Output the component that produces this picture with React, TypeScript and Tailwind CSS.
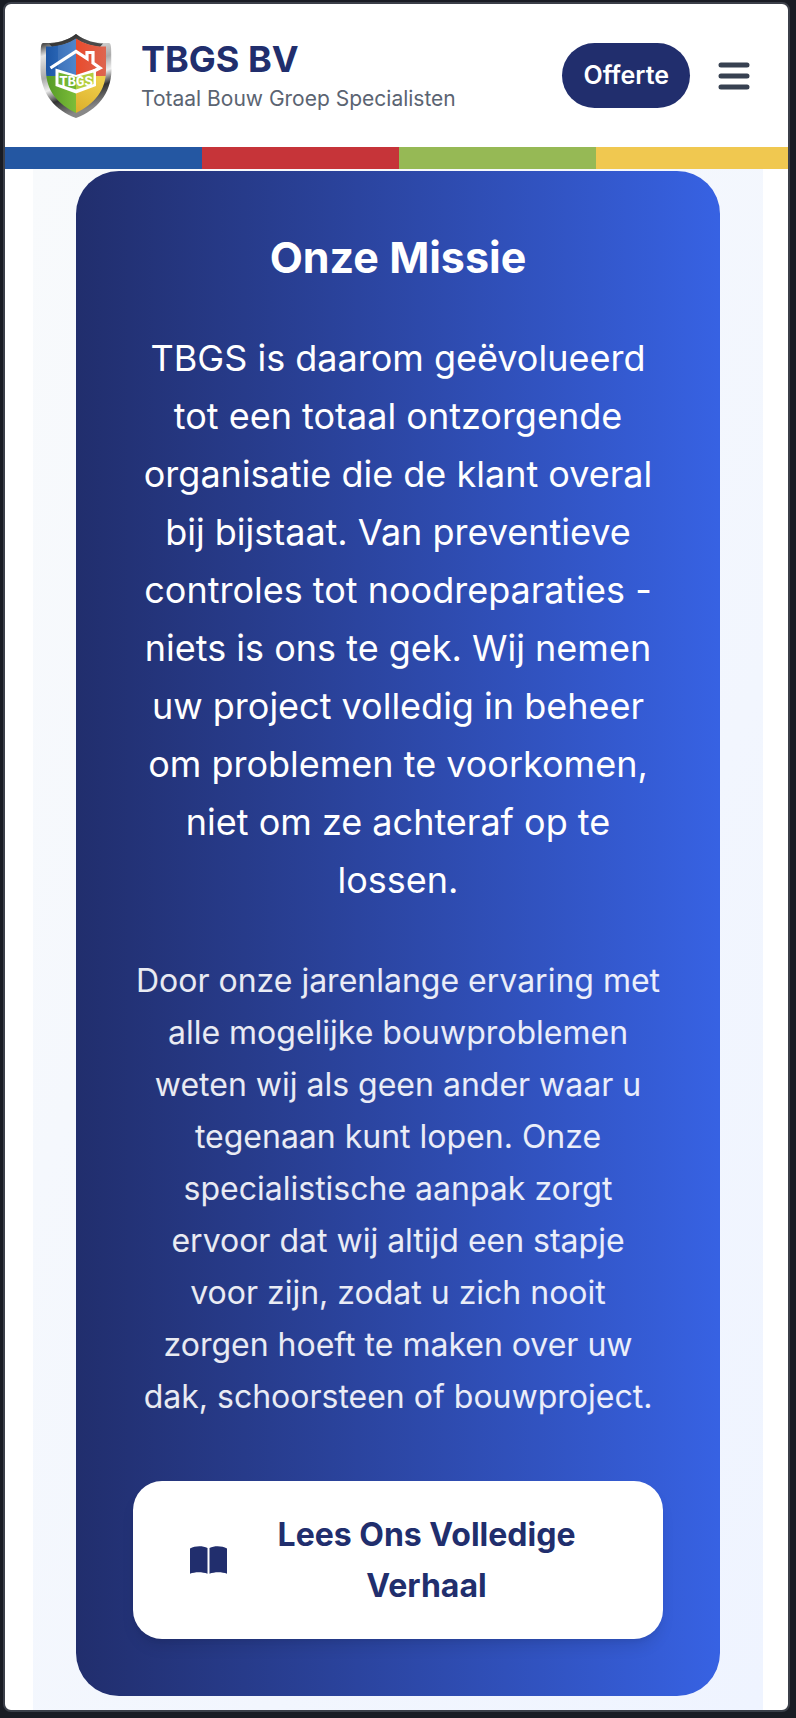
const missionText =
  'TBGS is daarom geëvolueerd tot een totaal ontzorgende organisatie die de klant overal bij bijstaat. Van preventieve controles tot noodreparaties - niets is ons te gek. Wij nemen uw project volledig in beheer om problemen te voorkomen, niet om ze achteraf op te lossen.';

const experienceText =
  'Door onze jarenlange ervaring met alle mogelijke bouwproblemen weten wij als geen ander waar u tegenaan kunt lopen. Onze specialistische aanpak zorgt ervoor dat wij altijd een stapje voor zijn, zodat u zich nooit zorgen hoeft te maken over uw dak, schoorsteen of bouwproject.';

function ShieldLogo() {
  return (
    <svg viewBox="0 0 72 84" className="h-[84px] w-[72px] shrink-0" role="img" aria-label="TBGS logo">
      <defs>
        <linearGradient id="rim" x1="0" y1="0" x2="0.3" y2="1">
          <stop offset="0" stopColor="#222" />
          <stop offset="0.13" stopColor="#555" />
          <stop offset="0.25" stopColor="#e4e4e4" />
          <stop offset="0.5" stopColor="#aaa" />
          <stop offset="0.65" stopColor="#eee" />
          <stop offset="0.8" stopColor="#333" />
          <stop offset="1" stopColor="#888" />
        </linearGradient>
        <linearGradient id="blue" x1="0" x2="1">
          <stop offset="0" stopColor="#164f9f" />
          <stop offset="1" stopColor="#3b78c6" />
        </linearGradient>
        <linearGradient id="red" x1="0" x2="1">
          <stop offset="0" stopColor="#e94b2c" />
          <stop offset="1" stopColor="#db6a57" />
        </linearGradient>
        <linearGradient id="green" x1="0" x2="1">
          <stop offset="0" stopColor="#4d9224" />
          <stop offset="1" stopColor="#7cbd38" />
        </linearGradient>
        <linearGradient id="yellow" x1="0" y1="1" x2="0.4" y2="0">
          <stop offset="0" stopColor="#d9aa25" />
          <stop offset="1" stopColor="#efcf4c" />
        </linearGradient>
        <clipPath id="shield">
          <path d="M36 4.500C28 10 17 13 6 12.500V36C6 57 18 70 36 79C54 70 66 57 66 36V12.500C55 13 44 10 36 4.500Z" />
        </clipPath>
      </defs>
      <path
        d="M36 0C27 7 15 9.500 3 9C0 9.500 1 17 0.500 36C1 60 15 76 36 84C57 76 71 60 71.500 36C71 17 72 9.500 69 9C57 9.500 45 7 36 0Z"
        fill="url(#rim)"
      />
      <path d="M36 0C27 7 15 9.500 9 9.500L12 13C20 12 28 10 36 5C44 10 52 12 60 13L63 9.500C57 9.500 45 7 36 0Z" fill="#252525" opacity="0.8" />
      <g clipPath="url(#shield)">
        <rect width="36" height="42" fill="url(#blue)" />
        <rect x="36" width="36" height="42" fill="url(#red)" />
        <rect y="42" width="36" height="42" fill="url(#green)" />
        <rect x="36" y="42" width="36" height="42" fill="url(#yellow)" />
        <path d="M18 9L36 3V42H18Z" fill="#fff" opacity="0.1" />
      </g>
      <path d="M15.500 34.500L36 41L56 34.500V52L36 59.500L15.500 52Z" fill="#fff" />
      <path d="M18.500 38.500L36 43V55.500L18.500 50Z" fill="#72b534" />
      <path d="M36 43L53.500 38.500V50L36 55.500Z" fill="#b4cf40" />
      <path d="M10.500 34L36 17.500L47 24.500V18.500H53V29L60 34L53 37.500" fill="none" stroke="#fff" strokeWidth="3.2" />
      <text x="36" y="51.500" textAnchor="middle" fill="#fff" className="font-['Liberation_Mono',monospace] text-[14px] font-bold">
        TBGS
      </text>
    </svg>
  );
}

function MenuIcon() {
  return (
    <svg viewBox="0 0 32 28" className="h-7 w-8" stroke="#374151" strokeWidth="5" strokeLinecap="round" aria-hidden="true">
      <path d="M3 3H29M3 14H29M3 25H29" />
    </svg>
  );
}

function BookIcon() {
  return (
    <svg viewBox="0 0 37 28" className="h-7 w-[37px] shrink-0" fill="currentColor" aria-hidden="true">
      <path d="M0 2.500C5 -0.300 12.500 -0.500 17.500 2V27.800C12.500 25.800 5 25.700 0 27.800Z" />
      <path d="M19.500 2C24.500 -0.500 32 -0.300 37 2.500V27.800C32 25.700 24.500 25.800 19.500 27.800Z" />
    </svg>
  );
}

export default function App() {
  return (
    <div className="flex min-h-screen flex-col bg-[#191c24] pt-0.5 pr-1.5 pb-1.5 pl-[3px] font-['Inter',sans-serif]">
      <div className="flex grow flex-col overflow-hidden rounded-lg border-2 border-[#3b3f49] bg-white">
        <header>
          <div className="flex h-[143px] items-center justify-between pr-[38px] pl-[35px]">
            <a href="#" className="flex items-center gap-[29px]">
              <ShieldLogo />
              <span className="flex flex-col">
                <span className="text-[36px] leading-[46px] font-bold text-[#212e6d]">TBGS BV</span>
                <span className="text-[21px] leading-[34px] text-[#5b6472]">Totaal Bouw Groep Specialisten</span>
              </span>
            </a>
            <div className="flex items-center gap-7">
              <a
                href="#offerte"
                className="flex h-[65px] items-center rounded-full bg-[#212e6d] px-[21px] text-[25px] font-semibold text-white"
              >
                Offerte
              </a>
              <button type="button" aria-label="Menu openen" className="flex h-14 items-center">
                <MenuIcon />
              </button>
            </div>
          </div>
          <div className="-mr-[5px] grid h-[22px] grid-cols-4">
            <span className="bg-[#2457a2]" />
            <span className="bg-[#c63439]" />
            <span className="bg-[#96b955]" />
            <span className="bg-[#f0c850]" />
          </div>
        </header>
        <main className="mr-[25px] ml-7 grow bg-linear-to-br from-[#f8fafc] to-[#eff4ff] px-[43px] pt-0.5 pb-3.5">
          <section className="rounded-[43px] bg-linear-to-r from-[#212e6d] to-[#3762e3] p-[57px] text-center text-white">
            <h2 className="mb-[43px] text-[43px] leading-[58px] font-bold">Onze Missie</h2>
            <p className="mb-[46px] text-[36px] leading-[58px]">{missionText}</p>
            <p className="mb-[58px] px-0.5 text-[32px] leading-[52px] text-white/90">{experienceText}</p>
            <a
              href="#verhaal"
              className="flex items-center gap-5 rounded-[29px] bg-white px-[57px] py-7 text-[32px] leading-[51px] font-bold text-[#212e6d] shadow-lg"
            >
              <BookIcon />
              <span className="grow">Lees Ons Volledige Verhaal</span>
            </a>
          </section>
        </main>
      </div>
    </div>
  );
}
